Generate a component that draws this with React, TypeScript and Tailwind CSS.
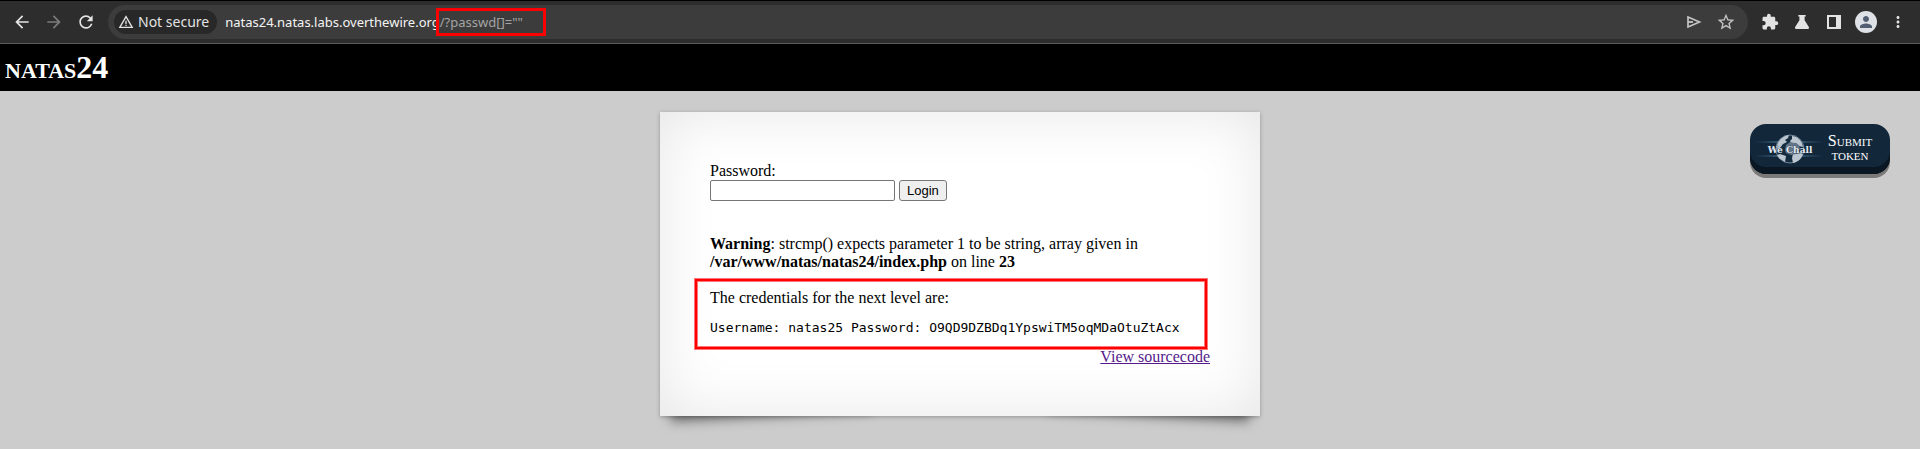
import React from "react";
import {
  MdArrowBack,
  MdArrowForward,
  MdRefresh,
  MdWarningAmber,
  MdStarBorder,
  MdExtension,
  MdPerson,
  MdMoreVert,
} from "react-icons/md";

function SendIcon() {
  return (
    <svg viewBox="0 0 16 14" className="h-[14px] w-4" fill="none" stroke="currentColor" aria-hidden="true">
      <path strokeWidth="1.7" d="M2 2l11.500 5L2 12z" />
      <path strokeWidth="1.8" d="M2 7h5" />
    </svg>
  );
}

function FlaskIcon() {
  return (
    <svg viewBox="0 0 14 14" className="size-[14px]" fill="currentColor" aria-hidden="true">
      <path d="M3.300 0h7.400v1.500H9.600v3.800l4.100 6.500c.7 1.100.1 2.200-1.200 2.200h-11C.2 14-.4 12.900.3 11.800l4.100-6.500V1.500H3.300z" />
    </svg>
  );
}

function SidePanelIcon() {
  return (
    <svg viewBox="0 0 14 14" className="size-[14px]" fill="currentColor" aria-hidden="true">
      <path fillRule="evenodd" d="M0 0h14v14H0zM2 2v10h7V2z" />
    </svg>
  );
}

function WeChallLogo() {
  return (
    <svg viewBox="0 0 74 40" className="h-10 w-[74px] shrink-0" aria-hidden="true">
      <defs>
        <linearGradient id="beam" x1="0" x2="1" y1="0" y2="0">
          <stop offset="0" stopColor="#4f86a8" stopOpacity="0" />
          <stop offset=".5" stopColor="#6fa5c6" stopOpacity=".6" />
          <stop offset="1" stopColor="#4f86a8" stopOpacity="0" />
        </linearGradient>
      </defs>
      <rect x="4" y="13" width="70" height="2" fill="url(#beam)" />
      <rect x="4" y="27" width="70" height="2" fill="url(#beam)" />
      <circle cx="40" cy="21" r="14" fill="#142c40" stroke="#75879a" strokeWidth="1" />
      <path
        fill="#bcc6d1"
        d="M27 17q2-6 8-9l4-1-1 3-3 2 2 2-4 2-3 4-3 1zM42 8q6 0 10 7l1 4-4-1-3-3-4 1-2-3 2-2zM27 27l3-1 6 2-1 6-3-2q-4-2-5-5zM43 26l8-1 2 1q-2 6-7 8l-3 1-1-5z"
      />
      <path fill="#64778b" d="M36 17l4-3 5 1 4 2 1 4-4 5-5 1-5-2-1-3z" />
      <text
        x="40"
        y="25"
        textAnchor="middle"
        fill="#e4ebf2"
        stroke="#1c3347"
        strokeWidth=".6"
        paintOrder="stroke"
        fontFamily="DejaVu Serif, serif"
        fontWeight="700"
        fontSize="9"
      >
        We Chall
      </text>
    </svg>
  );
}

function BrowserBar() {
  return (
    <div className="flex h-11 items-center border-t border-b border-t-black border-b-[#5a5a5a] bg-[#2d2d2d] pr-[6px] pl-3 font-['Noto_Sans',sans-serif] text-sm text-[#e3e3e3]">
      <nav className="flex items-center gap-3">
        <button type="button" aria-label="Back" className="flex size-5 items-center justify-center">
          <MdArrowBack className="size-5" />
        </button>
        <button type="button" aria-label="Forward" className="flex size-5 items-center justify-center text-[#7c7c7c]">
          <MdArrowForward className="size-5" />
        </button>
        <button type="button" aria-label="Reload" className="flex size-5 items-center justify-center">
          <MdRefresh className="size-5" />
        </button>
      </nav>
      <div className="ml-3 flex h-[34px] flex-1 items-center rounded-full bg-[#3c3c3c] px-[6px]">
        <button type="button" className="flex h-6 items-center gap-1 rounded-full bg-[#282828] pr-2 pl-1">
          <MdWarningAmber className="size-4" />
          Not secure
        </button>
        <div role="textbox" aria-label="Address" tabIndex={0} className="ml-2 flex-1 text-[13px] whitespace-nowrap text-[#f4f4f4]">
          natas24.natas.labs.overthewire.org
          <span className="relative text-[#a4a4a4]">
            /?passwd[]=""
            <span className="absolute -top-[5px] -right-[23px] -left-1 h-7 border-3 border-[#f00]" />
          </span>
        </div>
        <div className="flex items-center text-[#c4c4c4]">
          <button type="button" aria-label="Share this page" className="flex size-8 items-center justify-center">
            <SendIcon />
          </button>
          <button type="button" aria-label="Bookmark this page" className="flex size-8 items-center justify-center">
            <MdStarBorder className="size-5" />
          </button>
        </div>
      </div>
      <div className="ml-[6px] flex items-center">
        <button type="button" aria-label="Extensions" className="flex size-8 items-center justify-center">
          <MdExtension className="size-[18px]" />
        </button>
        <button type="button" aria-label="Labs" className="flex size-8 items-center justify-center">
          <FlaskIcon />
        </button>
        <button type="button" aria-label="Side panel" className="flex size-8 items-center justify-center">
          <SidePanelIcon />
        </button>
        <button type="button" aria-label="Profile" className="flex size-8 items-center justify-center">
          <span className="flex size-[22px] items-center justify-center rounded-full bg-[#dee1e6] text-[#525f73]">
            <MdPerson className="size-[18px]" />
          </span>
        </button>
        <button type="button" aria-label="Menu" className="flex size-8 items-center justify-center">
          <MdMoreVert className="size-[18px]" />
        </button>
      </div>
    </div>
  );
}

function SubmitToken() {
  return (
    <a
      href="#submit"
      className="absolute top-[33px] right-[30px] flex h-[50px] w-[140px] items-center rounded-2xl bg-[#12273a] pr-[14px] pb-[2px] text-white shadow-[inset_0_-7px_0_#0a1621,0_4px_0_#7c7a78]"
    >
      <WeChallLogo />
      <span className="flex-1 text-center leading-[14px] [font-variant:small-caps]">
        Submit
        <br />
        token
      </span>
    </a>
  );
}

export default function App() {
  return (
    <div className="flex min-h-screen flex-col bg-[#ccc] font-['Liberation_Serif',serif] text-base leading-[18px] text-black">
      <BrowserBar />
      <h1 className="h-[47px] bg-black pt-1 pl-[5px] text-[32px] leading-[38px] font-bold text-white [font-variant:small-caps]">
        natas24
      </h1>
      <main className="relative flex-1 px-4 pt-[21px]">
        <div className="relative isolate mx-auto max-w-[600px]">
          <div className="absolute bottom-2 left-4 -z-10 h-[100px] w-[200px] [transform:skew(-8deg)_rotate(-3deg)] shadow-[0_8px_12px_rgba(0,0,0,0.5)]" />
          <div className="absolute right-4 bottom-2 -z-10 h-[100px] w-[200px] [transform:skew(8deg)_rotate(3deg)] shadow-[0_8px_12px_rgba(0,0,0,0.5)]" />
          <section className="bg-white p-[50px] shadow-[0_1px_4px_rgba(0,0,0,0.27),inset_0_0_60px_rgba(0,0,0,0.1)]">
            <form>
              <label htmlFor="passwd" className="block">
                Password:
              </label>
              <div className="flex gap-1">
                <input
                  id="passwd"
                  name="passwd"
                  className="h-[21px] w-[185px] rounded-xs border border-[#767676] bg-white px-[2px]"
                />
                <button
                  type="button"
                  className="h-[21px] rounded-[3px] border border-[#767676] bg-[#efefef] px-[7px] font-['Liberation_Sans',sans-serif] text-[13px] leading-[19px]"
                >
                  Login
                </button>
              </div>
            </form>
            <p className="mt-[34px]">
              <b>Warning</b>: strcmp() expects parameter 1 to be string, array given in{" "}
              <b>/var/www/natas/natas24/index.php</b> on line <b>23</b>
            </p>
            <div className="relative mt-[18px]">
              <p>The credentials for the next level are:</p>
              <pre className="my-[13px] font-['DejaVu_Sans_Mono',monospace] text-[13px] leading-[15px]">
                Username: natas25 Password: O9QD9DZBDq1YpswiTM5oqMDaOtuZtAcx
              </pre>
              <div className="absolute -top-[10px] right-[3px] -bottom-[14px] -left-[15px] border-2 border-[#f00] shadow-[0_0_0_1px_#f008,inset_0_0_0_1px_#f008]" />
            </div>
            <p className="text-right">
              <a href="#source" className="text-[#551a8b] underline">
                View sourcecode
              </a>
            </p>
          </section>
        </div>
        <SubmitToken />
      </main>
    </div>
  );
}
